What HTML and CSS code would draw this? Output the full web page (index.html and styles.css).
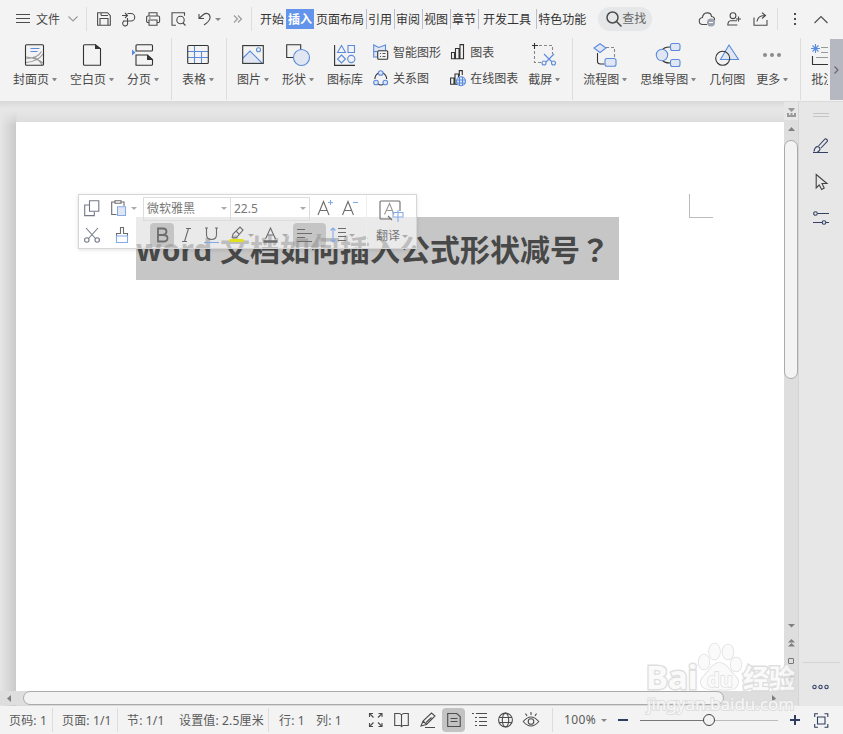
FILE: index.html
```html
<!DOCTYPE html>
<html lang="zh-CN">
<head>
    <meta charset="UTF-8">
    <title>WPS 文字</title>
    <link rel="stylesheet" href="styles.css">
</head>
<body>
    <div class="menubar">
        <div class="file-menu">
            <svg width="14" height="12"><path d="M0 1.500h14M0 5.500h14M0 9.500h14"/></svg>
            <span>文件</span>
            <svg class="light" width="10" height="8"><path d="M.5 1.500L5 6l4.500-4.500"/></svg>
        </div>
        <div class="quick">
            <svg width="14" height="14"><path d="M.6.7h10l2.700 3v9.600H.6zM4 .7v2.500M4 3.500h7M3 13V6.500h8V13"/></svg>
            <svg width="15" height="14"><path d="M1 3.500h5M4 1l2.500 2.500L4 6M6.500 1.500h3.500a3.500 3.500 0 0 1 0 7.500H2M6.500 6v4.500a2.500 2.500 0 1 1-3-1.500"/></svg>
            <svg width="15" height="14"><path d="M3 4V.7h8V4M3 10.500H1.800A1.200 1.200 0 0 1 .6 9.300v-4A1.300 1.300 0 0 1 1.900 4h10.400a1.300 1.300 0 0 1 1.300 1.300v4a1.200 1.200 0 0 1-1.200 1.200H11M3 8h8v5.300H3zM3 6h1.500"/></svg>
            <svg width="16" height="15"><path d="M5 13.300H1V.7h12.500v3M14.500 13.500L12 11"/><circle cx="9.500" cy="8" r="3.700"/></svg>
            <svg width="14" height="14"><path d="M2 2v4.500h5M2.500 6l4-3.500C9.500 0 13.500 2 13 6c-.3 3-3 5-6 7"/></svg>
            <i class="caret"></i>
            <svg class="light" width="10" height="9"><path d="M1 .5l3.500 3.500L1 7.500M5 .5l3.500 3.500L5 7.500"/></svg>
        </div>
        <div class="tabs">
            <span class="tab">开始</span>
            <span class="tab active">插入</span>
            <span class="tab">页面布局</span>
            <span class="tab">引用</span>
            <span class="tab">审阅</span>
            <span class="tab">视图</span>
            <span class="tab">章节</span>
            <span class="tab wide">开发工具</span>
            <span class="tab">特色功能</span>
        </div>
        <div class="search">
            <svg width="16" height="16"><g stroke-width="1.500"><circle cx="6.500" cy="6.500" r="5.500"/><path d="M10.500 10.500l5 5"/></g></svg>
            <span>查找</span>
        </div>
        <div class="account">
            <svg width="17" height="14"><path d="M8 12.500H4A3.500 3.500 0 0 1 3.500 5.500C4 -.5 12 -.5 12.500 4.500c2 .2 3.500 1.500 3 4"/><circle class="badge" cx="12" cy="10.500" r="4"/><path class="white" d="M10 10.500h4"/></svg>
            <svg width="15" height="14"><circle cx="6" cy="3.700" r="2.900"/><path d="M10 8.800H3.500Q1 9 .8 13h9.500M11.500 4.500v5M9 7h5"/></svg>
            <svg width="15" height="14"><path d="M1 5.500v7.800h13V8M4 9.500q1-6 8-6M9 .7l3.500 2.800L9 6.500"/></svg>
        </div>
        <div class="window-tools">
            <svg width="4" height="14"><path d="M2 1v2M2 6v2M2 11v2" stroke-width="2"/></svg>
            <svg width="15" height="9"><path d="M.5 8l6.500-6.500L13.500 8"/></svg>
        </div>
    </div>

    <div class="ribbon">
        <div class="tool">
            <svg width="22" height="23"><g class="gray"><path d="M2.500 14.500q11 0 15-7M2 18.500q12-1 17-8.500M2 13q11 1 17 6M9 13q6 2 9 8"/></g><rect class="dark" x="1.500" y=".7" width="18" height="20.600" rx="1"/><path class="blue" d="M6.500 4.500h9M6.500 7.500h7"/></svg>
            <span>封面页<i class="caret"></i></span>
        </div>
        <div class="tool">
            <svg width="22" height="23"><path class="dark" d="M3.500.7h11l5 4v16.600h-16q-1 0-1-1V1.700q0-1 1-1z"/><path class="fill-dark" d="M14 0v5h6z"/></svg>
            <span>空白页<i class="caret"></i></span>
        </div>
        <div class="tool">
            <svg width="22" height="23"><path class="dark" d="M4 7V1.700q0-1 1-1h14.500q1 0 1 1V6q0 1-1 1H4zM4 21.300V11h11.500l5 4.500v4.800q0 1-1 1z"/><path class="fill-dark" d="M15 10.500V16h6z"/><path class="fill-blue" d="M0 5.500l3.500 3-3.500 3z"/></svg>
            <span>分页<i class="caret"></i></span>
        </div>
        <i class="line"></i>
        <div class="tool">
            <svg width="22" height="23"><path class="blue" d="M1 7.500h20M1 13.500h20M7.500 2v18M14.500 7v13"/><rect class="dark" x=".7" y="1.500" width="20.600" height="18" rx="1"/></svg>
            <span>表格<i class="caret"></i></span>
        </div>
        <i class="line"></i>
        <div class="tool">
            <svg width="22" height="23"><path class="fill-soft" d="M1 14l7-7 13 12.500H1z"/><path class="blue" d="M1 14l7-7 12 12"/><circle class="blue" cx="16.500" cy="5.800" r="2"/><rect class="dark" x=".7" y="1.600" width="20.600" height="17.800"/></svg>
            <span>图片<i class="caret"></i></span>
        </div>
        <div class="tool">
            <svg width="24" height="23"><path class="dark" d="M8 13.500H.7V.7h14V6"/><circle class="blue soft" cx="15.500" cy="13.500" r="8"/></svg>
            <span>形状<i class="caret"></i></span>
        </div>
        <div class="tool">
            <svg width="22" height="23"><path class="dark" d="M.6 1v20.400h20.400"/><path class="blue" d="M3.500 8.500L7.500 1.500l4 7zM14 1.500h6.500v7H14zM7.500 11l4 4-4 4-4-4z"/><circle class="blue" cx="17.300" cy="15" r="3.600"/></svg>
            <span>图标库</span>
        </div>
        <div class="tool-list">
            <div class="mini">
                <svg width="16" height="17"><path class="blue soft" d="M4 13H.7V1l5 2.500L12.500 1v5"/><path class="blue" d="M.7 7.500H4"/><rect class="dark paper" x="4.700" y="6.700" width="10" height="8.600" rx="1"/><path class="dots-line" d="M7 9.500h1M9.500 9.500h3M7 12.500h1M9.500 12.500h3"/></svg>
                <span>智能图形</span>
            </div>
            <div class="mini">
                <svg width="16" height="17"><path class="dark" d="M5.500 3Q2 5 1.800 9M10 3q3.500 2 3.700 6M5 14q3 2 6 0"/><g class="blue soft"><circle cx="7.700" cy="3" r="2.300"/><circle cx="3" cy="12.500" r="2.300"/><circle cx="12.300" cy="12.500" r="2.300"/></g></svg>
                <span>关系图</span>
            </div>
        </div>
        <div class="tool-list charts">
            <div class="mini">
                <svg width="16" height="17"><path class="dark" d="M1.500 8.500h3v6.300h-3zM5.500 4.500h3.500v10.300H5.500zM10 .6h3.500v14.200H10z"/></svg>
                <span>图表</span>
            </div>
            <div class="mini">
                <svg width="16" height="17"><path class="dark" d="M.6 8h3.400v6.300H.6zM5 4h3.500v10.300H5zM9.300 6V.6h3V5"/><g class="blue soft"><circle cx="11" cy="11.300" r="4.500"/><path d="M6.500 10h9M6.500 13h9M9.500 7v9M12.500 7v9"/></g></svg>
                <span>在线图表</span>
            </div>
        </div>
        <div class="tool shot">
            <svg width="24" height="23"><path class="dash" d="M2.500 7v11.500H9M7 1.500h13.500V10"/><path class="dark" d="M0 1.500h6M2.500 -1v6"/><path class="blue" d="M12 10l8 8M22 10l-8 8"/><circle class="blue" cx="12" cy="19" r="2"/><circle class="blue" cx="21.500" cy="19" r="2"/></svg>
            <span>截屏<i class="caret"></i></span>
        </div>
        <i class="line"></i>
        <div class="tool">
            <svg width="24" height="23"><path class="dash" d="M13 3.500h8.500V14"/><path class="dark" d="M4.500 9v8.500q0 2.500 3 2.500h4"/><path class="blue soft" d="M7 -.3l6 4.300-6 4.500L1 4z"/><rect class="blue soft" x="12" y="14.500" width="11" height="7.800" rx="2"/></svg>
            <span>流程图<i class="caret"></i></span>
        </div>
        <div class="tool">
            <svg width="26" height="24"><path class="dark" d="M7 7q1-4 8-4M7 15q1 4 8 4"/><circle class="blue soft" cx="7" cy="11" r="5.700"/><rect class="blue soft" x="15.500" y="-.5" width="9.500" height="7" rx="2"/><rect class="blue soft" x="15.500" y="15.500" width="9.500" height="7" rx="2"/></svg>
            <span>思维导图<i class="caret"></i></span>
        </div>
        <div class="tool">
            <svg width="24" height="23"><path class="blue soft" d="M14 1L23.500 15.500H5.500z"/><circle class="dark" cx="7.700" cy="14.300" r="7"/></svg>
            <span>几何图</span>
        </div>
        <div class="tool more">
            <svg width="20" height="23"><g class="dots"><circle cx="3" cy="11" r="2"/><circle cx="10" cy="11" r="2"/><circle cx="17" cy="11" r="2"/></g></svg>
            <span>更多<i class="caret"></i></span>
        </div>
        <i class="line"></i>
        <div class="tool cut">
            <svg width="17" height="23"><path class="dark" d="M1.500 12v8.500H17"/><path class="gray" d="M10 3.500h7M10 8.500h7M5 13.500h12"/><path class="blue" d="M4.500 0v9M0 4.500h9M1.500 1.500l6 6M7.500 1.500l-6 6"/></svg>
            <span>批注</span>
        </div>
        <div class="ribbon-next"><svg width="5" height="8"><path d="M.5.5L4 4 .5 7.500"/></svg></div>
    </div>

    <div class="workspace">
        <div class="canvas">
            <div class="page">
                <p class="heading">word 文档如何插入公式形状减号<span class="mark" lang="zh-TW">？</span></p>
                <i class="margin-corner"></i>

                <div class="mini-toolbar">
                    <div class="clipboard">
                        <svg width="16" height="17"><path class="slate" d="M5.500.7h9.300v10.600H5.500zM5 5H.7v10.600h9.600V12"/></svg>
                        <svg width="16" height="17"><path d="M5.500 14.500H.7V2H4M10 2h3v4M4 .7h6v2.600H4z"/><path class="blue soft" d="M6.500 6.700h8V15.500h-8z"/></svg>
                        <i class="caret"></i>
                        <svg width="16" height="17"><path class="slate" d="M2 1l9.500 10.500M14 1L4.500 11.500"/><circle class="slate" cx="2.800" cy="13" r="2.200"/><circle class="slate" cx="13.200" cy="13" r="2.200"/></svg>
                        <svg class="brush" width="16" height="17"><path d="M2.500 9V6.500h4v-6h3v6h4V9"/><path class="blue" d="M2.500 9h11v6.500h-11z"/></svg>
                    </div>
                    <div class="format">
                        <div class="selects">
                            <span class="font-name">微软雅黑<i class="caret"></i></span>
                            <span class="font-size">22.5<i class="caret"></i></span>
                            <svg width="17" height="17"><path d="M1 15L6.500 1.500 12 15M3 10.500h7"/><path class="blue" d="M11 2.500h5M13.500 0v5"/></svg>
                            <svg width="17" height="17"><path d="M1.500 15L7 1.500 12.500 15M3.500 10.500h7"/><path class="blue" d="M12 2.500h5"/></svg>
                        </div>
                        <div class="styles">
                            <span class="on bold"><svg width="14" height="16"><path stroke-width="1.800" d="M3 1.500h5q3.500 0 3.500 3T8 8H3zm0 6.500h5.500q4 0 4 3.200t-4 3.300H3z"/></svg></span>
                            <svg width="10" height="16"><path d="M4 1.500h5M0 14.500h5M6.500 1.500l-4 13"/></svg>
                            <svg width="15" height="17"><path d="M2.500 1v6.500q0 5 5 5t5-5V1M1 1h3M11 1h3"/><path class="blue" d="M0 15.500h15"/></svg>
                            <svg width="18" height="18"><path d="M4 12L5 8l7-7 3 3-6.500 7.500-4 .5M8 5l3 3"/><path class="yellow" d="M2.500 14.500h12" stroke-linecap="round"/></svg>
                            <i class="caret"></i>
                            <svg width="15" height="17"><path d="M2.500 12L7.500 1l5 11M4.500 8h6"/><path d="M.5 14.500h14" stroke-width="2.500"/></svg>
                            <i class="caret"></i>
                            <span class="on align"><svg width="16" height="15"><path d="M0 1.500h8M0 5.500h15M0 9.500h8M0 13.500h15"/></svg><i class="caret"></i></span>
                            <svg width="17" height="16"><path class="blue" d="M3 1v14M.5 3.500L3 1l2.500 2.500M.5 12.500L3 15l2.500-2.500"/><path d="M8 1.500h8M8 5.500h8M8 9.500h8M8 13.500h8"/></svg>
                            <i class="caret"></i>
                        </div>
                    </div>
                    <div class="translate">
                        <svg width="25" height="23"><path d="M13 19H2q-1 0-1-1V2q0-1 1-1h18q1 0 1 1V11M9 16l4 4"/><path class="gray" d="M5.500 14.500L10.500 3.500l4.500 11M7.500 10.500h6"/><path class="blue" d="M14 12.500h10V17H14zM19 10v12"/></svg>
                        <span>翻译<i class="caret"></i></span>
                    </div>
                </div>
            </div>
            <div class="hscroll">
                <svg width="5" height="7"><path d="M4 0v7L0 3.500z"/></svg>
                <div class="hthumb"></div>
                <svg width="5" height="7"><path d="M0 0v7l4-3.500z"/></svg>
            </div>
        </div>
        <div class="vscroll">
            <div class="ruler-toggle"><svg width="9" height="10"><path d="M1.500 0h6v1L4.500 4l-3-3zM0 5h2v2h1.500V5h2v2H7V5h2v4H0z"/></svg></div>
            <svg class="up" width="7" height="4"><path d="M0 4l3.500-4L7 4z"/></svg>
            <div class="vthumb"></div>
            <div class="page-nav">
                <svg width="7" height="4"><path d="M0 0h7L3.500 3.500z"/></svg>
                <svg width="7" height="8"><path d="M0 3.500L3.500 0 7 3.500zM0 7.500L3.500 4 7 7.500z"/></svg>
                <i class="browse"></i>
                <svg width="7" height="8"><path d="M0 0h7L3.500 3.500zM0 4h7L3.500 7.500z"/></svg>
            </div>
        </div>
        <div class="sidebar">
            <i class="grip"></i>
            <svg width="16" height="16"><path d="M0 14.500h15M1 13.500Q1.500 9.500 4 8.500q3 0 3 3-1 2-3 3M5.500 8L12 1q2-.5 2.500 2L8 10"/></svg>
            <svg class="pointer" width="16" height="17"><path d="M3.200 .5V14l3-3 2.500 4.500 2.500-1.500L9 9.500h5z"/></svg>
            <svg width="16" height="15"><path d="M4.500 2.500H16M0 11.500h9M13 11.500h3"/><circle cx="2.500" cy="2.500" r="1.800"/><circle cx="11" cy="11.500" r="1.800"/></svg>
            <div class="sidebar-more"><svg width="17" height="6"><circle cx="2.500" cy="3" r="1.700"/><circle cx="8.500" cy="3" r="1.700"/><circle cx="14.500" cy="3" r="1.700"/></svg></div>
        </div>
    </div>

    <div class="statusbar">
        <span class="stat first">页码: 1</span>
        <span class="stat pages">页面: 1/1</span>
        <span class="stat section">节: 1/1</span>
        <span class="stat position">设置值: 2.5厘米</span>
        <span class="stat row">行: 1</span>
        <span class="stat col">列: 1</span>
        <div class="views">
            <svg width="16" height="16"><path d="M1.500 5V1.500H5M1.500 1.500L5.500 5.500M10.500 1.500H14V5M14 1.500L10 5.500M1.500 11v3.500H5M1.500 14.500l4-4M14 11v3.500h-3.500M14 14.500l-4-4"/></svg>
            <svg width="16" height="16"><path d="M7.500 3Q6.500 1.500 5 1.500H.7v12H6q1.500 0 1.500 1.500 .5-1.500 2-1.500h4.800v-12H10Q8.500 1.500 7.500 3zv12"/></svg>
            <svg width="17" height="16"><path d="M1 14L3 9l8.500-8 3.500 3-8.500 8.500L1 14zM3 9l3.500 3.500M11.500 5.500L6 10.500M5 15.500h10"/></svg>
            <span class="view-on"><svg width="16" height="16"><path d="M1.700 1.500h9l3.500 3v10H1.700zM4.500 6.500h7M4.500 9.500h7"/></svg></span>
            <svg width="16" height="16"><path d="M0 1.500h2M4 1.500h11M3 5.500h2M7 5.500h8M3 9.500h2M7 9.500h8M3 13.500h2M7 13.500h8"/></svg>
            <svg width="16" height="16"><circle cx="7.500" cy="8" r="6.900"/><ellipse cx="7.500" cy="8" rx="3.200" ry="6.900"/><path d="M1 5.500h13M1 10.500h13"/></svg>
            <svg width="17" height="16"><path d="M-.8 9.500q7.800-9 15.600 0-7.800 9-15.600 0zM7 0v3M1.500 1.500L3 4M12.500 1.500L11 4"/><circle cx="7" cy="9.500" r="2.800"/></svg>
        </div>
        <div class="zoom">
            <span>100%</span><i class="caret"></i>
            <svg class="navy" width="10" height="10"><path d="M0 5h10" stroke-width="2"/></svg>
            <div class="slider"><i class="knob"></i></div>
            <svg class="navy" width="10" height="10"><path d="M0 5h10M5 0v10" stroke-width="2"/></svg>
            <svg class="navy" width="15" height="15"><path d="M.7 4V.7H4M10.500 .7h3.300V4M.7 11v3.300H4M10.500 14.300h3.300V11M3.500 4h7.500v7H3.500z"/></svg>
        </div>
    </div>

    <div class="watermark">
        <div class="brand">
            <span class="bai">Bai</span>
            <svg class="paw" width="48" height="52"><ellipse cx="7" cy="20" rx="5.500" ry="7.500"/><ellipse cx="17.500" cy="9.500" rx="5.500" ry="8"/><ellipse cx="31" cy="10" rx="5.500" ry="7.500"/><ellipse cx="39" cy="22.500" rx="5.500" ry="7"/><path d="M22.500 21q5 0 9 5.500 3 4 6 7 6 5 2 11-3 4-17 3-14 1-17-3-4-6 2-11 3-3 6-7 4-5.500 9-5.500z"/><text x="10" y="45">du</text></svg>
            <span class="jingyan">经验</span>
        </div>
        <div class="site">jingyan.baidu.com</div>
    </div>
</body>
</html>
```

FILE: styles.css
```css
* {
    box-sizing: border-box;
}

body {
    width: 843px;
    height: 734px;
    margin: 0;
    overflow: hidden;
    position: relative;
    background: #f3f3f3;
    color: #484848;
    font: 12px/16px "Noto Sans", "Noto Sans CJK SC", sans-serif;
    white-space: nowrap;
}

svg {
    display: block;
    flex: none;
    overflow: visible;
    fill: none;
    stroke: #4c4c4c;
    stroke-width: 1.1;
}

svg.light, .gray { stroke: #999; }
.dark { stroke: #333; }
.blue { stroke: #5b8bdc; }
.soft { fill: #e0e7f3; }
.fill-soft { fill: #e0e7f3; stroke: none; }
.paper { fill: #f3f3f3; }
.fill-dark { fill: #333; stroke: none; }
.fill-blue { fill: #5b8bdc; stroke: none; }
.dash { stroke: #888; stroke-dasharray: 3 2; }
.dots { fill: #8c8c8c; stroke: none; }
.dots-line { stroke: #555; }
.slate { stroke: #727887; }
.yellow { stroke: #e0e01c; stroke-width: 3; }
.badge { fill: #9ba2ae; stroke: none; }
.white { stroke: #fff; }

.caret {
    flex: none;
    width: 0;
    height: 0;
    border: 3px solid transparent;
    border-top-color: #888;
    border-bottom: 0;
}

/* top menu row */
.menubar {
    display: flex;
    align-items: center;
    height: 38px;
}

.file-menu {
    display: flex;
    align-items: center;
    width: 87px;
    height: 24px;
    padding-left: 16px;
    border-right: 1px solid #ddd;
}

.file-menu span { margin: 1px 8px 0 6px; }

.quick {
    display: flex;
    align-items: center;
    width: 165px;
    height: 24px;
    padding-left: 10px;
    gap: 10px;
    border-right: 1px solid #ddd;
}

.quick .caret { margin: 0 2px 0 -6px; }

.tabs {
    display: flex;
    margin-left: 7px;
}

.tab {
    height: 20px;
    padding: 3px 2px 0 1px;
    border-right: 1px solid #b8c0d0;
    color: #333;
}

.tab:first-child {
    border: 0;
    padding-right: 2px;
}

.tab.active {
    padding: 3px 2px 0;
    margin-right: 1px;
    border: 0;
    background: #6294eb;
    color: #fff;
    font-weight: bold;
}

.tab.wide { padding: 3px 5px 0 4px; }
.tab:last-child { border: 0; }

.search {
    display: flex;
    align-items: center;
    width: 54px;
    height: 24px;
    margin-left: 10px;
    padding-left: 8px;
    border-radius: 12px;
    background: #e6e7e9;
    color: #666;
}

.account {
    display: flex;
    align-items: center;
    width: 80px;
    height: 22px;
    margin-left: 46px;
    padding-left: 1px;
    gap: 11px;
    border-right: 1px solid #ddd;
}

.window-tools {
    display: flex;
    align-items: center;
    margin-left: 15px;
    gap: 17px;
}

/* ribbon */
.ribbon {
    position: relative;
    display: flex;
    height: 64px;
    border-bottom: 1px solid #dadada;
}

.tool {
    display: flex;
    flex-direction: column;
    align-items: center;
    margin-left: 13px;
    padding-top: 6px;
}

.tool > svg { height: 24px; }
.tool span {
    display: flex;
    align-items: center;
    margin-top: 4px;
    gap: 3px;
}

.tool span .caret {
    width: 5px;
    margin-top: -2px;
    border-width: 3px 2.5px 0;
}

.line {
    width: 1px;
    height: 62px;
    margin-left: 12px;
    background: #ddd;
}

.line + .tool { margin-left: 10px; }
.shot { margin-left: 10px; }
.more { margin-left: 11px; }

.tool-list {
    margin: 6px 0 0 10px;
}

.tool-list.charts { margin-left: 9px; }

.mini {
    display: flex;
    align-items: center;
    height: 26px;
    gap: 4px;
}

.mini svg { margin-top: -9px; }
.mini span { margin-top: -8px; }

.cut {
    width: 17px;
    align-items: flex-start;
    overflow: hidden;
}

.ribbon-next {
    display: flex;
    align-items: center;
    justify-content: center;
    width: 13px;
    height: 61px;
    margin: 1px 0 0 auto;
    background: #b5b8c1;
}

.ribbon-next svg { stroke: #666; }

/* document area */
.workspace {
    display: flex;
    height: 604px;
    background: #e7e7e7;
}

.canvas {
    width: 784px;
    padding-top: 20px;
    background: linear-gradient(#dadada, #e6e6e6 6px, #e6e6e6 9px, transparent 24px), linear-gradient(90deg, #e6e6e6, #cacaca 16px, #dadada 17px);
}

.page {
    position: relative;
    height: 569px;
    margin-left: 16px;
    padding: 95px 0 0 120px;
    background: #fff;
}

.heading {
    width: 483px;
    height: 63px;
    margin: 0;
    background: #c6c6c6;
    font-size: 30px;
    font-weight: bold;
    line-height: 63px;
}

.mark { font-family: "Noto Sans CJK TC", sans-serif; }

.margin-corner {
    position: absolute;
    left: 673px;
    top: 72px;
    width: 24px;
    height: 24px;
    border-left: 1px solid #bbb;
    border-bottom: 1px solid #bbb;
}

/* floating format bar over the selection */
.mini-toolbar {
    position: absolute;
    left: 62px;
    top: 72px;
    display: flex;
    width: 339px;
    height: 55px;
    border: 1px solid #d6d6d6;
    background: rgba(255, 255, 255, .64);
    box-shadow: 0 1px 4px rgba(0, 0, 0, .12);
    color: #777;
}

.mini-toolbar svg { stroke: #6c6c6c; }
.mini-toolbar .caret { border-top-color: #aaa; }
.mini-toolbar .blue { stroke: #85aae9; }

.clipboard {
    display: grid;
    grid-template-columns: 27px 20px 6px;
    grid-template-rows: 27px 27px;
    align-items: center;
    padding-left: 5px;
}

.clipboard svg:nth-of-type(3) { grid-column: 1; }
.brush { margin-left: 3px; }

.format { padding-left: 6px; }

.selects {
    display: flex;
    align-items: center;
    height: 27px;
}

.font-name,
.font-size {
    display: flex;
    align-items: center;
    justify-content: space-between;
    height: 24px;
    padding: 0 3px;
    border: 1px solid #ddd;
}

.font-name { width: 88px; }
.font-size {
    width: 80px;
    margin-left: -1px;
}

.selects svg { margin-left: 7px; }

.styles {
    display: flex;
    align-items: center;
    height: 26px;
}

.on {
    display: flex;
    align-items: center;
    justify-content: center;
    height: 24px;
    border-radius: 4px;
    background: rgba(130, 130, 130, .35);
}

.bold {
    width: 24px;
    margin: 0 8px 0 7px;
}

.styles > svg { margin-right: 12px; }
.styles > svg:nth-of-type(2) { margin-right: 9px; }
.styles > svg:nth-of-type(3) { margin-right: 2px; }
.styles > svg:nth-of-type(4) { margin: 0 4px 0 9px; }
.styles > svg:nth-of-type(5) { margin: 0 2px 0 4px; }
.align {
    width: 33px;
    margin-left: 5px;
    gap: 3px;
}

.translate {
    width: 50px;
    margin-left: auto;
    padding: 5px 0 0 12px;
    border-left: 1px solid #eee;
}

.translate span {
    display: flex;
    align-items: center;
    margin: 5px 0 0 -3px;
    gap: 2px;
}

.hscroll {
    display: flex;
    align-items: center;
    width: 798px;
    height: 14px;
    padding-left: 7px;
    background: #dedede;
}

.hscroll svg,
.vscroll svg {
    fill: #808080;
    stroke: none;
}

.hthumb {
    width: 701px;
    height: 14px;
    margin: 0 48px 0 11px;
    border: 1px solid #aaa;
    border-radius: 7px;
    background: #f3f3f3;
}

.vscroll {
    display: flex;
    flex-direction: column;
    align-items: center;
    width: 14px;
    height: 589px;
    background: #dedede;
}

.vscroll .ruler-toggle {
    width: 14px;
    height: 18px;
    padding: 6px 0 0 3px;
    background: #e7e7e7;
}

.vscroll .ruler-toggle svg { fill: #999; }

.up { margin: 7px 0 9px; }

.vthumb {
    width: 14px;
    height: 239px;
    border: 1px solid #aaa;
    border-radius: 7px;
    background: #f3f3f3;
}

.page-nav {
    display: flex;
    flex-direction: column;
    align-items: center;
    margin-top: 245px;
    gap: 11px;
}

.browse {
    width: 6px;
    height: 6px;
    border: 1px solid #777;
    border-radius: 1px;
}

.sidebar {
    display: flex;
    flex-direction: column;
    align-items: center;
    width: 45px;
    border-left: 1px solid #d4d4d4;
    background: #e7e7e7;
}

.sidebar svg { stroke: #354065; }
.sidebar .pointer {
    margin: 20px 0;
    stroke: #444;
}

.grip {
    width: 16px;
    height: 4px;
    margin: 11px 0 21px;
    border: solid #c4c4c4;
    border-width: 1px 0;
}

.sidebar-more {
    width: 38px;
    margin-top: auto;
    padding: 21px 0 16px 10px;
    border-top: 1px solid #d4d4d4;
}

/* status bar */
.statusbar {
    display: flex;
    align-items: center;
    height: 28px;
    color: #5a5a5a;
}

.stat {
    height: 24px;
    padding: 5px 0 0 9px;
    letter-spacing: .15px;
}

.first {
    width: 53px;
    border-right: 1px solid #ddd;
}

.pages {
    width: 65px;
    border-right: 1px solid #ddd;
}

.section { width: 52px; }
.position {
    width: 99px;
    border-right: 1px solid #ddd;
}

.row { width: 37px; padding-left: 10px; }
.col { width: 62px; padding-left: 10px; }

.views {
    display: flex;
    align-items: center;
    width: 185px;
    height: 24px;
    gap: 10px;
    border-right: 1px solid #ddd;
}

.view-on {
    display: flex;
    align-items: center;
    justify-content: center;
    width: 23px;
    height: 24px;
    margin: 0 -3px 0 -5px;
    border-radius: 4px;
    background: #c3c3c3;
}

.zoom {
    display: flex;
    align-items: center;
    padding-left: 11px;
}

.zoom span {
    width: 37px;
    letter-spacing: .4px;
}

.zoom .caret { margin-right: 11px; }
.navy { stroke: #2f3e5e; }

.slider {
    display: flex;
    align-items: center;
    justify-content: center;
    width: 138px;
    height: 14px;
    margin: 0 12px;
    background: linear-gradient(90deg, #777 50%, #bbb 50%) center / 100% 1px no-repeat;
}

.knob {
    width: 12px;
    height: 12px;
    border: 1px solid #444;
    border-radius: 50%;
    background: #f3f3f3;
}

.zoom svg:last-child { margin-left: 14px; }

/* translucent site mark over the bottom right corner */
.watermark {
    position: absolute;
    left: 646px;
    top: 642px;
    width: 152px;
    color: #fafafa;
    opacity: .85;
    paint-order: stroke;
    -webkit-text-stroke: 3px #dadada;
}

.brand {
    display: flex;
    height: 52px;
}

.bai {
    width: 51px;
    padding-top: 16px;
    font: bold 33px/38px "Noto Sans", sans-serif;
}

.paw {
    fill: #fafafa;
    stroke: #dadada;
    stroke-width: 1.5;
}

.paw text {
    font: bold 20px "Noto Sans", sans-serif;
    paint-order: stroke;
}

.jingyan {
    padding-top: 16px;
    margin-left: -2px;
    font: bold 26px/38px "Noto Sans CJK SC", sans-serif;
}

.site {
    padding-left: 1px;
    font: 17px/20px "Noto Sans", sans-serif;
    -webkit-text-stroke: 2px #dadada;
}
```
